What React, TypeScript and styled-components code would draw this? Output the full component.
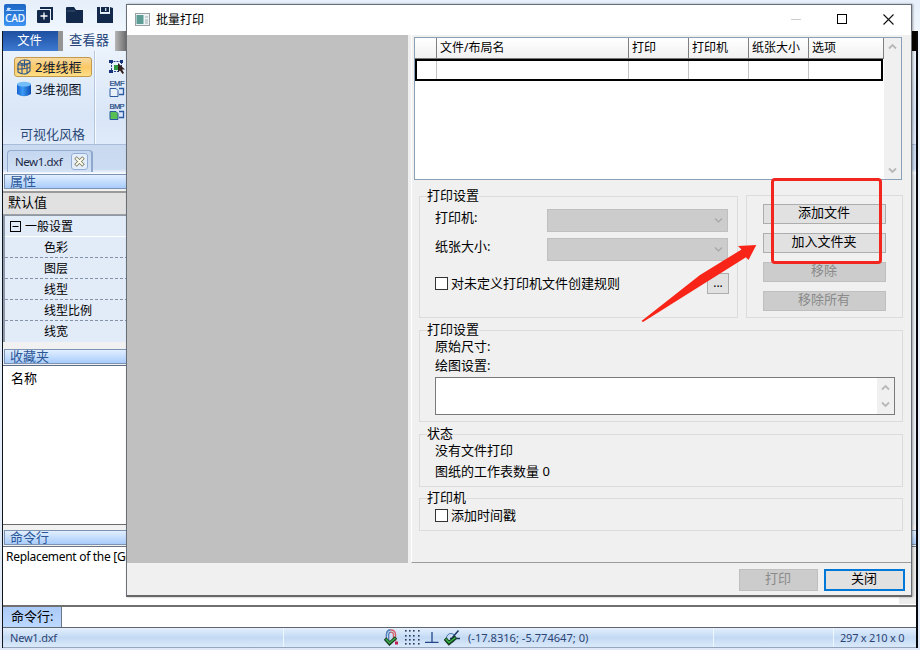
import React from "react";
import styled, { createGlobalStyle } from "styled-components";

const Global = createGlobalStyle`
  *, *::before, *::after { box-sizing: border-box; }
  body { margin: 0; overflow: hidden; }
  body, button { font-family: "Noto Sans", "Noto Sans CJK SC", sans-serif; }
  svg { display: block; flex: none; }
`;

/* ---------- application window ---------- */

const Desktop = styled.div`
  position: relative;
  width: 920px;
  height: 650px;
  overflow: hidden;
  background: linear-gradient(180deg, #e6effa 0, #eff6fd 31px, #dfe9f7 100%);
  color: #000;
  font-size: 13px;
  white-space: nowrap;
`;

const QuickBar = styled.div`
  display: flex;
  align-items: flex-start;
  height: 31px;
  padding: 4px 0 0 4px;
`;

const QuickIcon = styled.div<{ $gap: number; $top: number }>`
  margin: ${(p) => p.$top}px 0 0 ${(p) => p.$gap}px;
`;

const AppWindow = styled.div`
  display: flex;
  flex-direction: column;
  width: 916px;
  height: 617px;
  margin-left: 2px;
  border-left: 1px solid #10141c;
  border-right: 2px solid #05070c;
`;

const TabStrip = styled.div`
  display: flex;
  flex: none;
  height: 20px;
  background: linear-gradient(90deg, #8d8d8d 50px, #c4c4c4 110px, #6e6e6e 123px, #000 160px);
`;

const RibbonTab = styled.div<{ $active?: boolean }>`
  width: ${(p) => (p.$active ? 52 : 55)}px;
  margin-left: ${(p) => (p.$active ? 5 : 0)}px;
  padding-right: ${(p) => (p.$active ? 0 : 2)}px;
  text-align: center;
  line-height: ${(p) => (p.$active ? 18 : 19)}px;
  font-size: ${(p) => (p.$active ? 13.3 : 12.3)}px;
  color: ${(p) => (p.$active ? "#27457c" : "#fff")};
  background: ${(p) =>
    p.$active ? "linear-gradient(180deg, #f4f8fe, #eaf2fc)" : "linear-gradient(180deg, #1f4f9f, #2f68bf 60%, #3d7ad0)"};
`;

const Ribbon = styled.div`
  display: flex;
  flex: none;
  height: 94px;
  border-bottom: 1px solid #a9bddb;
  background: linear-gradient(180deg, #eaf2fc, #d9e6f7 70%, #dfeafa);
`;

const StyleGroup = styled.div`
  display: flex;
  flex-direction: column;
  width: 92px;
  padding: 6px 0 0 11px;
  border-right: 1px solid #b4c6e0;
  box-shadow: 1px 0 #f7fbff;
`;

const StyleButton = styled.div<{ $on?: boolean }>`
  display: flex;
  align-items: center;
  gap: 3px;
  width: 78px;
  height: ${(p) => (p.$on ? 20 : 22)}px;
  margin-top: ${(p) => (p.$on ? 0 : 1)}px;
  padding-left: 1px;
  border: 1px solid ${(p) => (p.$on ? "#c39a4c" : "transparent")};
  border-radius: 3px;
  background: ${(p) => (p.$on ? "linear-gradient(180deg, #f7d9a0, #fbc866 50%, #ffdf86)" : "none")};
  line-height: 18px;
  color: #10182c;
`;

const GroupCaption = styled.div`
  margin-top: 25px;
  padding-left: 6px;
  line-height: 20px;
  color: #2c4877;
`;

const RibbonTools = styled.div`
  display: flex;
  flex-direction: column;
  gap: 5px;
  padding: 8px 0 0 14px;
`;

const DocTabs = styled.div`
  display: flex;
  flex: none;
  height: 29px;
  padding: 5px 0 0 4px;
  background: linear-gradient(180deg, #c9daf0, #cbdcf2 24px, #fff 29px);
`;

const DocTab = styled.div`
  display: flex;
  align-items: center;
  width: 86px;
  height: 22px;
  padding: 0 3px 0 7px;
  border: 1px solid #93abcf;
  border-bottom: 0;
  border-right: 2px solid #8ea7cb;
  border-radius: 4px 4px 0 0;
  background: linear-gradient(180deg, #c4d7f0, #d3e2f5);
  font-size: 11.5px;
  letter-spacing: -0.45px;
  color: #1b2a48;
`;

const TabClose = styled.div`
  display: grid;
  place-items: center;
  width: 17px;
  height: 17px;
  margin-left: auto;
  border: 1px solid #94add4;
  border-radius: 3px;
  background: #e4eefb;
`;

const Workspace = styled.div`
  display: flex;
  flex: none;
  height: 351px;
`;

const Sidebar = styled.div`
  display: flex;
  flex-direction: column;
  width: 240px;
`;

const Canvas = styled.div`
  flex: 1;
  background: #e9edf4;
`;

const PanelTitle = styled.div`
  flex: none;
  height: 15px;
  margin-left: 1px;
  padding-left: 5px;
  border: 1px solid #7d93b4;
  border-right: 0;
  background: linear-gradient(180deg, #e2efff, #a9ccfb);
  line-height: 12px;
  font-size: 13px;
  color: #2b5797;
`;

const Seam = styled.div<{ $h: number }>`
  flex: none;
  height: ${(p) => p.$h}px;
  background: #f1f1f1;
`;

const DefaultValue = styled.div`
  flex: none;
  height: 24px;
  padding-left: 5px;
  border-top: 2px solid #9a9a9a;
  border-bottom: 1px solid #a0a0a0;
  background: #e1e1e1;
  line-height: 18px;
`;

const Tree = styled.div`
  flex: none;
  height: 127px;
  border-left: 2px solid #8d98a8;
  border-top: 1px solid #8d98a8;
  background: #e2ebf8;
  font-size: 12px;
`;

const TreeHead = styled.div`
  display: flex;
  align-items: center;
  gap: 4px;
  height: 21px;
  padding-left: 5px;
  border-bottom: 1px solid #fff;
`;

const TreeRow = styled.div`
  height: 21px;
  padding-left: 39px;
  line-height: 22px;
  border-bottom: 1px dashed #8492a8;
  &:last-child { border-bottom: 0; }
`;

const Favourites = styled.div`
  flex: none;
  height: 160px;
  padding: 2px 0 0 8px;
  border-top: 1px solid #5e6e86;
  border-bottom: 1px solid #6b6b6b;
  background: #fff;
  line-height: 20px;
`;

const Log = styled.div`
  display: flex;
  justify-content: space-between;
  flex: none;
  height: 59px;
  padding-left: 3px;
  border-top: 1px solid #6b7280;
  background: #fff;
  font-size: 12px;
  letter-spacing: -0.3px;
  line-height: 19px;
`;

const LogScroll = styled.div`
  width: 17px;
  height: 57px;
  background: #ececec;
`;

const CommandRow = styled.div`
  display: flex;
  flex: none;
  height: 23px;
  border-top: 2px solid #707070;
  border-bottom: 1px solid #5f6670;
  background: #fff;
`;

const CommandLabel = styled.div`
  width: 59px;
  padding-left: 8px;
  border-right: 1px solid #6b7788;
  background: linear-gradient(180deg, #abcaf7, #bcd8ff);
  line-height: 19px;
`;

const StatusBar = styled.div`
  display: grid;
  grid-template-columns: 281px 98px 332px 120px 1fr;
  flex: none;
  height: 20px;
  border-bottom: 1px solid #95a6bd;
  background: linear-gradient(180deg, #e3effc, #c3daf4 50%, #dbe9fa);
  font-size: 11px;
  letter-spacing: -0.22px;
  line-height: 18px;
  color: #2b4474;
`;

const StatusCell = styled.div<{ $pad?: number; $line?: boolean }>`
  display: flex;
  align-items: center;
  padding-left: ${(p) => p.$pad ?? 0}px;
  border-right: ${(p) => (p.$line ? "1px solid #eef6ff" : "0")};
`;

const IconRow = styled.div`
  display: flex;
  align-items: center;
  gap: 5px;
  margin-left: 2px;
`;

const Coords = styled.span`
  margin-left: 7px;
  font-size: 11.1px;
  letter-spacing: 0;
`;

/* ---------- dialog ---------- */

const Dialog = styled.div`
  position: absolute;
  left: 126px;
  top: 4px;
  display: flex;
  flex-direction: column;
  width: 786px;
  height: 593px;
  border: 1px solid #686f78;
  border-bottom: 2px solid #666;
  background: #f0f0f0;
  box-shadow: 1px 0 2px rgba(0, 0, 0, 0.35);
`;

const DialogTitle = styled.div`
  display: flex;
  align-items: center;
  flex: none;
  height: 30px;
  padding: 0 17px 2px 8px;
  background: #fff;
  font-size: 12px;
`;

const TitleText = styled.span`
  margin: 0 auto 0 6px;
`;

const WindowControls = styled.div`
  display: flex;
  gap: 35px;
`;

const DialogBody = styled.div`
  display: flex;
  flex: none;
  height: 528px;
`;

const Preview = styled.div`
  width: 281px;
  margin-right: 3px;
  background: #c0c0c0;
`;

const Settings = styled.div`
  flex: 1;
  padding: 2px 7px 0 2px;
  border-left: 1px solid #fff;
  border-bottom: 1px solid #9b9b9b;
`;

const FileTable = styled.div`
  display: flex;
  width: 488px;
  height: 143px;
  border: 1px solid #8aa0b5;
  background: #fff;
`;

const TableGrid = styled.div`
  width: 469px;
`;

const Row = styled.div<{ $head?: boolean }>`
  display: grid;
  grid-template-columns: ${(p) => (p.$head ? "22px 192px 60px 60px 60px 75px" : "20px 192px 60px 60px 60px 72px")};
  width: ${(p) => (p.$head ? 469 : 468)}px;
  height: ${(p) => (p.$head ? 21 : 22)}px;
  border: ${(p) => (p.$head ? "0" : "2px solid #000")};
  border-bottom: ${(p) => (p.$head ? "1px solid #777" : "2px solid #000")};
  background: ${(p) => (p.$head ? "linear-gradient(180deg, #fff, #f1f1f1)" : "#fff")};
  line-height: 20px;
  font-size: 12px;
`;

const Cell = styled.div<{ $head?: boolean }>`
  padding-left: 3px;
  border-right: 1px solid ${(p) => (p.$head ? "#808080" : "#c4c4c4")};
  &:last-child { border-right: ${(p) => (p.$head ? "1px solid #808080" : "0")}; }
`;

const Scroll = styled.div<{ $w: number; $pad: number }>`
  display: flex;
  flex-direction: column;
  justify-content: space-between;
  align-items: center;
  width: ${(p) => p.$w}px;
  margin-left: auto;
  padding: ${(p) => p.$pad}px 0;
  background: #f0f0f0;
`;

const GroupRow = styled.div`
  display: flex;
  gap: 8px;
  align-items: flex-end;
  margin: 15px 0 0 5px;
`;

const Group = styled.section<{ $w: number; $h: number; $mt?: number; $pt?: number }>`
  position: relative;
  width: ${(p) => p.$w}px;
  height: ${(p) => p.$h}px;
  margin-top: ${(p) => p.$mt ?? 0}px;
  padding: ${(p) => p.$pt ?? 0}px 7px 0 15px;
  border: 1px solid #dcdcdc;
`;

const Stack = styled.div`
  margin-left: 5px;
`;

const Legend = styled.h2`
  position: absolute;
  left: 7px;
  top: -11px;
  margin: 0;
  background: #f0f0f0;
  font-size: 13px;
  font-weight: 400;
  line-height: 19px;
`;

const Field = styled.div`
  display: flex;
  justify-content: space-between;
  height: 29px;
  padding-right: 2px;
`;

const FieldLabel = styled.span`
  line-height: 19px;
`;

const Select = styled.div`
  display: flex;
  align-items: center;
  justify-content: flex-end;
  width: 181px;
  height: 23px;
  margin-top: 1px;
  padding-right: 4px;
  border: 1px solid #bfbfbf;
  background: #ccc;
`;

const CheckLine = styled.label<{ $mt: number }>`
  display: flex;
  align-items: center;
  height: 21px;
  margin-top: ${(p) => p.$mt}px;
`;

const CheckText = styled.span`
  padding-bottom: 1px;
  line-height: 18px;
`;

const Box = styled.span`
  width: 13px;
  height: 13px;
  margin-right: 3px;
  border: 1px solid #333;
  background: #fff;
`;

const More = styled.button`
  width: 22px;
  height: 21px;
  margin: 0 1px 0 auto;
  padding: 0 0 1px;
  border: 1px solid #adadad;
  background: #e1e1e1;
  font-size: 12px;
  line-height: 14px;
`;

const ButtonGroup = styled(Group)`
  display: flex;
  flex-direction: column;
  gap: 9px;
  padding: 8px 16px 0;
`;

const PushButton = styled.button<{ $off?: boolean; $primary?: boolean; $w?: number }>`
  width: ${(p) => p.$w ?? 123}px;
  height: ${(p) => (p.$w ? 22 : 20)}px;
  padding: 0 1px 3px 0;
  border: ${(p) => (p.$primary ? "2px solid #0078d7" : p.$off ? "1px solid #bfbfbf" : "1px solid #adadad")};
  background: ${(p) => (p.$off ? "#ccc" : "#e1e1e1")};
  color: ${(p) => (p.$off ? "#8a8a8a" : "#000")};
  font-size: 13px;
  line-height: 15px;
`;

const Line = styled.div<{ $h: number }>`
  height: ${(p) => p.$h}px;
  line-height: ${(p) => p.$h}px;
`;

const TextBox = styled.div`
  display: flex;
  width: 460px;
  height: 38px;
  margin-top: 2px;
  border: 1px solid #7a7a7a;
  background: #fff;
`;

const DialogFooter = styled.div`
  display: flex;
  justify-content: flex-end;
  gap: 6px;
  padding: 6px 6px 0;
`;

/* ---------- annotations ---------- */

const Highlight = styled.div`
  position: absolute;
  left: 771px;
  top: 178px;
  width: 111px;
  height: 86px;
  border: 3px solid #f3261f;
  border-radius: 4px;
`;

const ArrowMark = styled.svg`
  position: absolute;
  left: 636px;
  top: 240px;
`;

/* ---------- icons ---------- */

const CadLogo = () => (
  <svg width="22" height="22" viewBox="0 0 22 22">
    <defs>
      <linearGradient id="cad" x1="0" y1="0" x2="0" y2="1">
        <stop offset="0" stopColor="#1d66c4" />
        <stop offset="1" stopColor="#3c92f2" />
      </linearGradient>
    </defs>
    <rect width="22" height="22" rx="2" fill="url(#cad)" />
    <path d="M2 6.5H20M3 4.5h4" stroke="#a9d2ff" />
    <circle cx="4.5" cy="5" r="1.5" fill="#cfe6ff" />
    <text x="1.2" y="17.5" fontSize="10" fontFamily="Noto Sans, sans-serif" fill="#fff" stroke="#fff" strokeWidth="0.2" textLength="19.6" lengthAdjust="spacingAndGlyphs">CAD</text>
  </svg>
);
const NewIcon = () => (
  <svg width="17" height="17" viewBox="0 0 17 17">
    <path d="M3 1H15V13" fill="none" stroke="#12294b" strokeWidth="2" />
    <rect y="3" width="13" height="13" rx="1" fill="#12294b" />
    <path d="M3.5 9h7M7 5.5v7" stroke="#fff" strokeWidth="1.3" />
  </svg>
);
const FolderIcon = () => (
  <svg width="18" height="17" viewBox="0 0 18 17">
    <path d="M0 1Q0 0 1 0H8L10 3H17V16H1Q0 16 0 15Z" fill="#12294b" />
    <path d="M1 4H9" stroke="#3f5674" />
  </svg>
);
const SaveIcon = () => (
  <svg width="17" height="17" viewBox="0 0 17 17">
    <path d="M0 0H3V6H13V0L16 1V16H0Z" fill="#12294b" />
    <path d="M4 0H12V5H4Z" fill="#12294b" />
    <path d="M3 6.5H13M8.7 1V4" stroke="#dfe9f6" strokeWidth="1.2" />
  </svg>
);
const WireIcon = () => (
  <svg width="16" height="16" viewBox="0 0 16 16" fill="none" stroke="#2b5489" strokeWidth="1.1">
    <ellipse cx="9" cy="3" rx="5" ry="2" />
    <path d="M4 3L2 5V13Q6 16 11 14.5L14 12V3M6 4.5V15M11 5V14.5M1 10H6L14 8.5M2 5.5Q6 7 11 5.5L14 3.5M8.5 1V8.5" />
  </svg>
);
const CylinderIcon = () => (
  <svg width="16" height="16" viewBox="0 0 16 16">
    <defs>
      <linearGradient id="cyl">
        <stop offset="0" stopColor="#1763cf" />
        <stop offset="0.4" stopColor="#3b9bf5" />
        <stop offset="1" stopColor="#0c4cb4" />
      </linearGradient>
    </defs>
    <path d="M1 3V13Q8 17.5 15 13V3Z" fill="url(#cyl)" />
    <ellipse cx="8" cy="3.2" rx="7" ry="2.4" fill="#74bdf9" />
  </svg>
);
const SelectIcon = () => (
  <svg width="17" height="16" viewBox="0 0 17 16">
    <path d="M1.5 2.5H13M2.5 3V13M2 12.5H11M12.5 3V8" fill="none" stroke="#203f8c" strokeDasharray="2 1" />
    <path d="M0 1h4v3H0zM11 1h3v3h-3zM0 11h4v3H0z" fill="#14337c" />
    <rect x="5" y="6" width="5" height="5" fill="#2c9a3f" />
    <path d="M9 4V13L11 11.5L13.5 15L15 14L13 10.5H16Z" fill="#33201b" />
  </svg>
);
const ExportIcon = ({ label, fill }: { label: string; fill: string }) => (
  <svg width="17" height="18" viewBox="0 0 17 18">
    <text x="0.5" y="6" fontSize="7.5" fontFamily="Liberation Sans, sans-serif" fill="#19457e" stroke="#19457e" strokeWidth="0.2" textLength="15">{label}</text>
    <path d="M1 8.5H7L9 10.5V16.5H1Z" fill={fill} stroke="#2c5aa0" />
    <path d="M10 8.5H14.5V14.5H10" fill="none" stroke="#2c5aa0" strokeWidth="1.3" />
  </svg>
);
const CloseTabIcon = () => (
  <svg width="11" height="11" viewBox="0 0 11 11">
    <path d="M1.5 1.5L9.5 9.5M9.5 1.5L1.5 9.5" stroke="#76765a" strokeWidth="3.4" />
    <path d="M2 2L9 9M9 2L2 9" stroke="#fffef0" strokeWidth="1.8" />
  </svg>
);
const MinusBox = () => (
  <svg width="11" height="11" viewBox="0 0 11 11" fill="none" stroke="#000">
    <rect x="0.5" y="0.5" width="10" height="10" />
    <path d="M2.5 5.5H8.5" />
  </svg>
);
const Chevron = ({ up, wide }: { up?: boolean; wide?: boolean }) => (
  <svg width="9" height="7" viewBox="0 0 9 7" fill="none" stroke={wide ? "#a5a5a5" : "#b8b8b8"} strokeWidth={wide ? 1.2 : 1.8}>
    <path d={up ? "M1 5.5L4.5 2L8 5.5" : "M1 1.5L4.5 5L8 1.5"} />
  </svg>
);
const DialogIcon = () => (
  <svg width="15" height="13" viewBox="0 0 15 13">
    <rect x="0.5" y="0.5" width="14" height="12" fill="#eef2f2" stroke="#96a2a6" />
    <rect x="1.5" y="2" width="7" height="9" fill="#5d9d96" />
    <path d="M10 3h3v2h-3zM10 6h3v5h-3z" fill="#c6d0d2" />
  </svg>
);
const Magnet = () => (
  <svg width="16" height="17" viewBox="0 0 16 17" fill="none">
    <path d="M3.5 12V5.5Q3.5 2 7 2T10.5 5.5V12" stroke="#d85a62" strokeWidth="3.4" />
    <path d="M3.5 12V5.5Q3.5 2 6.5 2" stroke="#4d86c4" strokeWidth="3.4" />
    <path d="M3.5 10V5.5Q3.5 2 7 2T10.5 5.5V10" stroke="#c9d5e8" strokeWidth="1" />
    <path d="M1 9.5L5.5 14.5L12 8.5" stroke="#1d3f25" strokeWidth="3.6" />
    <path d="M1.8 10L5.5 14L11.5 9" stroke="#37b14a" strokeWidth="1.6" />
    <path d="M11 12.5h3v3h-3z" fill="#c01e50" />
  </svg>
);
const Dots = () => (
  <svg width="15" height="16" viewBox="0 0 15 16" fill="#25395c">
    {[0, 5, 9, 13].map((y) => [0, 4, 8, 13].map((x) => <rect key={`${x}-${y}`} x={x} y={y} width="1.6" height="1.6" />))}
  </svg>
);
const Ortho = () => (
  <svg width="14" height="14" viewBox="0 0 14 14" fill="none" stroke="#23488a" strokeWidth="1.3">
    <path d="M7 1V11M0 11.4H13.5" />
  </svg>
);
const Track = () => (
  <svg width="17" height="16" viewBox="0 0 17 16" fill="none">
    <circle cx="7" cy="8" r="4.5" stroke="#4671aa" />
    <path d="M6 8.5H16M8 8L14.5 0.5" stroke="#1b3564" strokeWidth="1.4" />
    <path d="M1 8.5L5 13L12 7" stroke="#173c20" strokeWidth="3.8" />
    <path d="M1.8 9L5 12.5L11.5 7.5" stroke="#39b54a" strokeWidth="1.5" />
  </svg>
);

const COLUMNS = ["", "文件/布局名", "打印", "打印机", "纸张大小", "选项"];
const PROPERTIES = ["色彩", "图层", "线型", "线型比例", "线宽"];

export default function App() {
  return (
    <>
      <Global />
      <Desktop>
        <QuickBar>
          <QuickIcon $gap={0} $top={0}><CadLogo /></QuickIcon>
          <QuickIcon $gap={11} $top={3}><NewIcon /></QuickIcon>
          <QuickIcon $gap={12} $top={3}><FolderIcon /></QuickIcon>
          <QuickIcon $gap={13} $top={3}><SaveIcon /></QuickIcon>
        </QuickBar>
        <AppWindow>
          <TabStrip>
            <RibbonTab>文件</RibbonTab>
            <RibbonTab $active>查看器</RibbonTab>
          </TabStrip>
          <Ribbon>
            <StyleGroup>
              <StyleButton $on><WireIcon />2维线框</StyleButton>
              <StyleButton><CylinderIcon />3维视图</StyleButton>
              <GroupCaption>可视化风格</GroupCaption>
            </StyleGroup>
            <RibbonTools>
              <SelectIcon />
              <ExportIcon label="EMF" fill="#e9f1fb" />
              <ExportIcon label="BMP" fill="#58bf55" />
            </RibbonTools>
          </Ribbon>
          <DocTabs>
            <DocTab>New1.dxf<TabClose><CloseTabIcon /></TabClose></DocTab>
          </DocTabs>
          <Workspace>
            <Sidebar>
              <PanelTitle>属性</PanelTitle>
              <Seam $h={2} />
              <DefaultValue>默认值</DefaultValue>
              <Tree>
                <TreeHead><MinusBox />一般设置</TreeHead>
                {PROPERTIES.map((name) => <TreeRow key={name}>{name}</TreeRow>)}
              </Tree>
              <Seam $h={7} />
              <PanelTitle>收藏夹</PanelTitle>
              <Seam $h={1} />
              <Favourites>名称</Favourites>
            </Sidebar>
            <Canvas />
          </Workspace>
          <Seam $h={5} />
          <PanelTitle>命令行</PanelTitle>
          <Seam $h={1} />
          <Log>Replacement of the [General settings]<LogScroll /></Log>
          <CommandRow><CommandLabel>命令行:</CommandLabel></CommandRow>
          <StatusBar>
            <StatusCell $pad={7} $line>New1.dxf</StatusCell>
            <StatusCell />
            <StatusCell $line>
              <IconRow>
                <Magnet />
                <Dots />
                <Ortho />
                <Track />
              </IconRow>
              <Coords>(-17.8316; -5.774647; 0)</Coords>
            </StatusCell>
            <StatusCell $line />
            <StatusCell $pad={6}>297 x 210 x 0</StatusCell>
          </StatusBar>
        </AppWindow>

        <Dialog role="dialog">
          <DialogTitle>
            <DialogIcon />
            <TitleText>批量打印</TitleText>
            <WindowControls>
              <svg width="11" height="11"><path d="M0 5.5H10" stroke="#ccc" /></svg>
              <svg width="11" height="11"><rect x="0.5" y="0.5" width="9" height="9" fill="none" stroke="#000" /></svg>
              <svg width="11" height="11"><path d="M0.5 0.5L10.5 10.5M10.5 0.5L0.5 10.5" stroke="#111" strokeWidth="1.1" /></svg>
            </WindowControls>
          </DialogTitle>
          <DialogBody>
            <Preview />
            <Settings>
              <FileTable>
                <TableGrid>
                  <Row $head>{COLUMNS.map((c) => <Cell $head key={c}>{c}</Cell>)}</Row>
                  <Row>{COLUMNS.map((c) => <Cell key={c} />)}</Row>
                </TableGrid>
                <Scroll $w={17} $pad={5}><Chevron up /><Chevron /></Scroll>
              </FileTable>
              <GroupRow>
                <Group $w={319} $h={122} $pt={11}>
                  <Legend>打印设置</Legend>
                  <Field><FieldLabel>打印机:</FieldLabel><Select><Chevron wide /></Select></Field>
                  <Field><FieldLabel>纸张大小:</FieldLabel><Select><Chevron wide /></Select></Field>
                  <CheckLine $mt={7}><Box /><CheckText>对未定义打印机文件创建规则</CheckText><More>...</More></CheckLine>
                </Group>
                <ButtonGroup $w={157} $h={123}>
                  <PushButton>添加文件</PushButton>
                  <PushButton>加入文件夹</PushButton>
                  <PushButton $off>移除</PushButton>
                  <PushButton $off>移除所有</PushButton>
                </ButtonGroup>
              </GroupRow>
              <Stack>
                <Group $w={484} $h={92} $mt={12} $pt={6}>
                  <Legend>打印设置</Legend>
                  <Line $h={19}>原始尺寸:</Line>
                  <Line $h={19}>绘图设置:</Line>
                  <TextBox><Scroll $w={17} $pad={6}><Chevron up /><Chevron /></Scroll></TextBox>
                </Group>
                <Group $w={484} $h={53} $mt={12} $pt={5}>
                  <Legend>状态</Legend>
                  <Line $h={21}>没有文件打印</Line>
                  <Line $h={21}>图纸的工作表数量 0</Line>
                </Group>
                <Group $w={484} $h={33} $mt={11}>
                  <Legend>打印机</Legend>
                  <CheckLine $mt={6}><Box /><CheckText>添加时间戳</CheckText></CheckLine>
                </Group>
              </Stack>
            </Settings>
          </DialogBody>
          <DialogFooter>
            <PushButton $off $w={79}>打印</PushButton>
            <PushButton $primary $w={81}>关闭</PushButton>
          </DialogFooter>
        </Dialog>

        <Highlight />
        <ArrowMark width="124" height="86" viewBox="636 240 124 86">
          <path d="M641.5 321L700 275L741.5 249.5L738 246L756.3 245L748.5 260L746 257.3L705 283L643 322Z" fill="#f92418" />
        </ArrowMark>
      </Desktop>
    </>
  );
}
